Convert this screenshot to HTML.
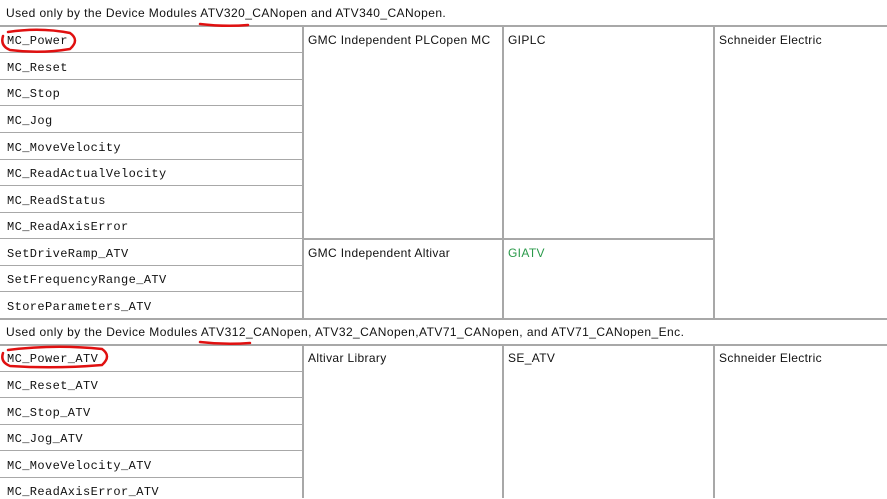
<!DOCTYPE html><html><head><style>
body{margin:0;width:887px;height:498px;overflow:hidden;background:#fff;position:relative;font-family:"Liberation Sans",sans-serif;font-size:12px;color:#111}
.a{position:absolute}
.h{position:absolute;height:1px;background:#a8a8a8}
.v{position:absolute;width:1px;background:#a8a8a8}
.m{position:absolute;left:7px;font-family:"Liberation Mono",monospace;font-size:12px;letter-spacing:0.4px}
.t{position:absolute;letter-spacing:0.35px}
</style></head><body>
<div class="t" style="left:6px;top:6px;letter-spacing:0.42px">Used only by the Device Modules ATV320_CANopen and ATV340_CANopen.</div>
<div class="h" style="left:0;top:25px;width:887px;height:2px"></div>
<div class="v" style="left:302px;top:26px;height:293px;width:2px"></div>
<div class="v" style="left:502px;top:26px;height:293px;width:2px"></div>
<div class="v" style="left:713px;top:26px;height:293px;width:2px"></div>
<div class="h" style="left:302px;top:238px;width:412px;height:2px"></div>
<div class="h" style="left:0;top:318px;width:887px;height:2px"></div>

<div class="h" style="left:0;top:52px;width:302px"></div>
<div class="h" style="left:0;top:79px;width:302px"></div>
<div class="h" style="left:0;top:105px;width:302px"></div>
<div class="h" style="left:0;top:132px;width:302px"></div>
<div class="h" style="left:0;top:159px;width:302px"></div>
<div class="h" style="left:0;top:185px;width:302px"></div>
<div class="h" style="left:0;top:212px;width:302px"></div>
<div class="h" style="left:0;top:238px;width:302px"></div>
<div class="h" style="left:0;top:265px;width:302px"></div>
<div class="h" style="left:0;top:291px;width:302px"></div>

<div class="m" style="top:34px">MC_Power</div>
<div class="m" style="top:61px">MC_Reset</div>
<div class="m" style="top:87px">MC_Stop</div>
<div class="m" style="top:114px">MC_Jog</div>
<div class="m" style="top:141px">MC_MoveVelocity</div>
<div class="m" style="top:167px">MC_ReadActualVelocity</div>
<div class="m" style="top:194px">MC_ReadStatus</div>
<div class="m" style="top:220px">MC_ReadAxisError</div>
<div class="m" style="top:247px">SetDriveRamp_ATV</div>
<div class="m" style="top:273px">SetFrequencyRange_ATV</div>
<div class="m" style="top:300px">StoreParameters_ATV</div>

<div class="t" style="left:308px;top:33px">GMC Independent PLCopen MC</div>
<div class="t" style="left:508px;top:33px">GIPLC</div>
<div class="t" style="left:719px;top:33px">Schneider Electric</div>
<div class="t" style="left:308px;top:246px">GMC Independent Altivar</div>
<div class="t" style="left:508px;top:246px;color:#2a9a4a">GIATV</div>

<div class="t" style="left:6px;top:325px;letter-spacing:0.44px">Used only by the Device Modules ATV312_CANopen, ATV32_CANopen,ATV71_CANopen, and ATV71_CANopen_Enc.</div>
<div class="h" style="left:0;top:344px;width:887px;height:2px"></div>
<div class="v" style="left:302px;top:345px;height:153px;width:2px"></div>
<div class="v" style="left:502px;top:345px;height:153px;width:2px"></div>
<div class="v" style="left:713px;top:345px;height:153px;width:2px"></div>
<div class="h" style="left:0;top:371px;width:302px"></div>
<div class="h" style="left:0;top:397px;width:302px"></div>
<div class="h" style="left:0;top:424px;width:302px"></div>
<div class="h" style="left:0;top:450px;width:302px"></div>
<div class="h" style="left:0;top:477px;width:302px"></div>
<div class="m" style="top:352px">MC_Power_ATV</div>
<div class="m" style="top:379px">MC_Reset_ATV</div>
<div class="m" style="top:406px">MC_Stop_ATV</div>
<div class="m" style="top:432px">MC_Jog_ATV</div>
<div class="m" style="top:459px">MC_MoveVelocity_ATV</div>
<div class="m" style="top:485px">MC_ReadAxisError_ATV</div>
<div class="t" style="left:308px;top:351px">Altivar Library</div>
<div class="t" style="left:508px;top:351px">SE_ATV</div>
<div class="t" style="left:719px;top:351px">Schneider Electric</div>

<svg class="a" style="left:0;top:0" width="887" height="498">
<g fill="none" stroke="#e01010" stroke-width="2.5" stroke-linecap="round">
<path d="M200 24 Q225 27 248 25"/>
<path d="M8 32 Q40 27 70 33 Q80 40 70 49 Q40 54 10 50 Q0 46 3 36"/>
<path d="M200 342 Q225 345 250 343"/>
<path d="M8 350 Q55 344 102 349 Q112 356 102 365 Q55 369 10 366 Q0 362 3 353"/>
</g></svg>
</body></html>
